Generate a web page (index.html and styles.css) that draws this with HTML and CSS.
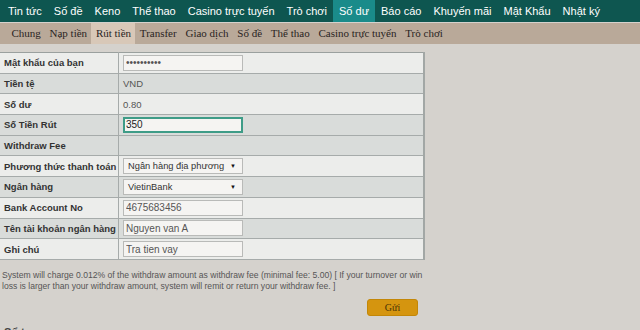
FILE: index.html
```html
<!DOCTYPE html>
<html lang="vi">
<head>
  <meta charset="UTF-8" />
  <title>Rút tiền</title>
  <link rel="stylesheet" href="styles.css">
</head>
<body>

  <!-- Menu chính -->
  <div class="topnav">
    <a href="#">Tin tức</a>
    <a href="#">Số đề</a>
    <a href="#">Keno</a>
    <a href="#">Thể thao</a>
    <a href="#">Casino trực tuyến</a>
    <a href="#">Trò chơi</a>
    <a href="#" class="active">Số dư</a>
    <a href="#">Báo cáo</a>
    <a href="#">Khuyến mãi</a>
    <a href="#">Mật Khẩu</a>
    <a href="#">Nhật ký</a>
  </div>

  <!-- Menu phụ -->
  <div class="subnav">
    <a href="#">Chung</a>
    <a href="#">Nạp tiền</a>
    <a href="#" class="active">Rút tiền</a>
    <a href="#">Transfer</a>
    <a href="#">Giao dịch</a>
    <a href="#">Số đề</a>
    <a href="#">Thể thao</a>
    <a href="#">Casino trực tuyến</a>
    <a href="#">Trò chơi</a>
  </div>

  <div class="content">
    <table class="form-table">
      <tr class="light">
        <th>Mật khẩu của bạn</th>
        <td><input type="password" class="field" value="**********"></td>
      </tr>
      <tr class="dark">
        <th>Tiền tệ</th>
        <td>VND</td>
      </tr>
      <tr class="light">
        <th>Số dư</th>
        <td>0.80</td>
      </tr>
      <tr class="dark">
        <th>Số Tiền Rút</th>
        <td><input type="text" class="field focus" value="350"></td>
      </tr>
      <tr class="dark">
        <th>Withdraw Fee</th>
        <td></td>
      </tr>
      <tr class="light">
        <th>Phương thức thanh toán</th>
        <td><div class="select">Ngân hàng địa phương <span class="arrow">▼</span></div></td>
      </tr>
      <tr class="dark">
        <th>Ngân hàng</th>
        <td><div class="select">VietinBank <span class="arrow">▼</span></div></td>
      </tr>
      <tr class="light">
        <th>Bank Account No</th>
        <td><input type="text" class="field" value="4675683456"></td>
      </tr>
      <tr class="dark">
        <th>Tên tài khoản ngân hàng</th>
        <td><input type="text" class="field" value="Nguyen van A"></td>
      </tr>
      <tr class="light">
        <th>Ghi chú</th>
        <td><input type="text" class="field" value="Tra tien vay"></td>
      </tr>
    </table>

    <p class="note">System will charge 0.012% of the withdraw amount as withdraw fee (minimal fee: 5.00) [ If your turnover or win loss is larger than your withdraw amount, system will remit or return your withdraw fee. ]</p>

    <div class="actions">
      <button class="btn">Gửi</button>
    </div>

    <h3 class="next">Sổ tay</h3>
  </div>

</body>
</html>
```

FILE: styles.css
```css
body {
  margin: 0;
  background: #d5d2cd;
  font-family: "Liberation Sans", Arial, sans-serif;
  color: #333;
  overflow: hidden;
}
.topnav {
  display: flex;
  height: 22px;
  background: #0e5650;
  padding-left: 2px;
}
.topnav a {
  flex-shrink: 0;
  white-space: nowrap;
  color: #fff;
  text-decoration: none;
  font-size: 11px;
  line-height: 22px;
  padding: 0 6px;
}
.topnav a.active {
  background: #1a8b8a;
}
.subnav {
  display: flex;
  height: 21px;
  margin-top: 1px;
  background: #b9a999;
  padding-left: 7px;
}
.subnav a {
  flex-shrink: 0;
  white-space: nowrap;
  color: #29241f;
  text-decoration: none;
  font-family: "Liberation Serif", "Times New Roman", serif;
  font-size: 11px;
  line-height: 21px;
  padding: 0 4.4px;
}
.subnav a.active {
  background: #d8c8b8;
}
.content {
  padding-top: 8px;
}
.form-table {
  border-collapse: collapse;
  width: 425px;
  border-top: 1px solid #9aa09e;
  border-right: 2px solid #a2a7a5;
  border-bottom: 1px solid #9aa09e;
  font-size: 9.5px;
}
.form-table tr {
  height: 20.7px;
  border-bottom: 1px solid #a6abaa;
}
.form-table tr.light {
  background: #ecedeb;
}
.form-table tr.dark {
  background: #d9dcda;
}
.form-table th {
  width: 114px;
  text-align: left;
  font-weight: bold;
  color: #333;
  padding: 0 0 0 4px;
  border-right: 1px solid #a6abaa;
  white-space: nowrap;
}
.form-table td {
  padding: 0 0 0 4px;
  color: #555;
}
.field {
  box-sizing: border-box;
  width: 120px;
  height: 16px;
  border: 1px solid #b9bab8;
  background: #f5f4f2;
  font-family: "Liberation Sans", Arial, sans-serif;
  font-size: 10px;
  color: #555;
  padding: 0 2px;
  display: block;
}
.field.focus {
  border: 2px solid #3e9c87;
  color: #222;
  padding: 0 1px;
}
.select {
  box-sizing: border-box;
  width: 120px;
  height: 16px;
  border: 1px solid #b9bab8;
  background: #f5f4f2;
  font-size: 9.3px;
  color: #333;
  line-height: 14px;
  padding: 0 6px 0 4px;
  display: flex;
  justify-content: space-between;
  white-space: nowrap;
  overflow: hidden;
}
.arrow {
  font-size: 6px;
  color: #111;
}
.note {
  margin: 10px 0 0 2px;
  width: 424px;
  font-size: 8.6px;
  line-height: 11px;
  color: #555;
}
.actions {
  width: 418px;
  display: flex;
  justify-content: flex-end;
  margin-top: 7px;
}
.btn {
  width: 51px;
  height: 17px;
  background: #d5950f;
  border: 1px solid #c38708;
  border-radius: 3px;
  font-family: "Liberation Serif", "Times New Roman", serif;
  font-size: 10px;
  color: #4a3305;
  padding: 0;
}
.next {
  margin: 10px 0 0 4px;
  font-size: 11px;
  color: #444;
}
```
